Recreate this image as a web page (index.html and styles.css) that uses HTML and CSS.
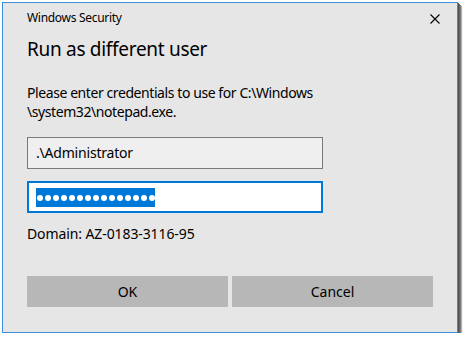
FILE: index.html
```html
<!DOCTYPE html>
<html lang="en">
<head>
<meta charset="utf-8">
<title>Windows Security</title>
<link rel="stylesheet" href="styles.css">
</head>
<body>
<div class="window">
  <div class="titlebar">
    <span class="title">Windows Security</span>
    <span class="close" aria-label="Close">
      <svg width="10" height="10" viewBox="0 0 10 10"><path d="M0.5 0.5 L9.5 9.5 M9.5 0.5 L0.5 9.5" stroke="#000" stroke-width="1.1" fill="none"/></svg>
    </span>
  </div>
  <h1 class="heading">Run as different user</h1>
  <p class="message">Please enter credentials to use for C:\Windows<br>\system32\notepad.exe.</p>
  <div class="field field-user">.\Administrator</div>
  <div class="field field-pass">
    <span class="selection">
      <i class="dot"></i><i class="dot"></i><i class="dot"></i><i class="dot"></i><i class="dot"></i><i class="dot"></i><i class="dot"></i><i class="dot"></i><i class="dot"></i><i class="dot"></i><i class="dot"></i><i class="dot"></i><i class="dot"></i><i class="dot"></i><i class="dot"></i>
    </span>
  </div>
  <p class="domain">Domain: AZ-0183-3116-95</p>
  <div class="buttons">
    <div class="btn">OK</div>
    <div class="btn">Cancel</div>
  </div>
</div>
</body>
</html>
```

FILE: styles.css
```css
html, body {
  margin: 0;
  padding: 0;
  background: #ffffff;
}
body {
  font-family: "Noto Sans", "Open Sans", sans-serif;
  color: #000;
}
.window {
  box-sizing: border-box;
  width: 456px;
  height: 331px;
  margin: 2px 0 0 2px;
  border: 1px solid #3d8fdc;
  background: #e6e6e6;
  padding: 0 24px 0 24px;
  display: flex;
  flex-direction: column;
  box-shadow: 1px 1px 0 #505050, 2px 2px 0 #666666, 3px 3px 0 #808080, 4px 4px 1px #b0b0b0;
}
.titlebar {
  height: 30px;
  display: flex;
  justify-content: space-between;
  align-items: center;
  margin-right: -7px;
}
.title {
  font-size: 12px;
  line-height: 30px;
  letter-spacing: -0.3px;
}
.close {
  width: 10px;
  height: 10px;
  display: block;
  margin-top: 1px;
}
.close svg { display: block; }
.heading {
  margin: 3px 0 0 0;
  font-size: 19px;
  font-weight: normal;
  line-height: 26px;
  letter-spacing: -0.3px;
}
.message {
  margin: 21px 0 0 0;
  font-size: 14px;
  line-height: 19px;
  letter-spacing: -0.42px;
}
.field {
  box-sizing: border-box;
  width: 296px;
  height: 32px;
  font-size: 14px;
  line-height: 30px;
}
.field-user {
  margin-top: 16px;
  border: 1px solid #7a7a7a;
  background: #efefef;
  padding-left: 8px;
  letter-spacing: -0.2px;
}
.field-pass {
  margin-top: 12px;
  border: 2px solid #0078d7;
  background: #ffffff;
  padding: 5px 0 0 7px;
}
.selection {
  display: flex;
  align-items: center;
  width: 119px;
  height: 19px;
  background: #0078d7;
  padding: 1px 0 0 1px;
  box-sizing: border-box;
  gap: 2px;
}
.dot {
  display: block;
  width: 6px;
  height: 6px;
  border-radius: 50%;
  background: #ffffff;
}
.domain {
  margin: 11px 0 0 0;
  font-size: 14px;
  line-height: 19px;
  letter-spacing: -0.1px;
}
.buttons {
  margin-top: 33px;
  display: grid;
  grid-template-columns: 1fr 1fr;
  gap: 4px;
}
.btn {
  height: 31px;
  background: #b7b7b7;
  font-size: 14px;
  line-height: 31px;
  text-align: center;
}
```
